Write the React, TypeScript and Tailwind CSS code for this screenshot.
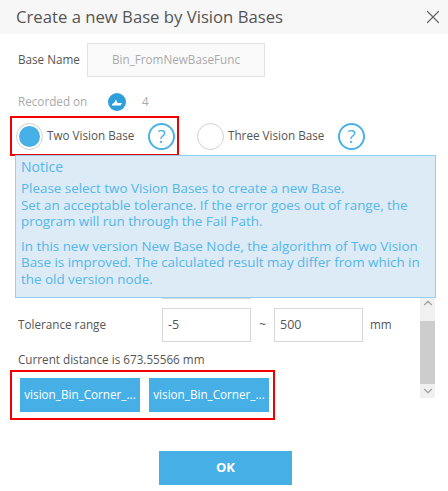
import { ChevronDown, ChevronUp, X } from "lucide-react";

function Help() {
  return (
    <span className="flex h-[27px] w-[27px] items-center justify-center rounded-full border-2 border-[#4ab2e6] text-[19px] leading-none text-[#4ab2e6]">
      ?
    </span>
  );
}

function Radio({ checked }: { checked?: boolean }) {
  return (
    <span className="flex h-[27px] w-[27px] items-center justify-center rounded-full border border-[#d0d0d0] bg-white">
      {checked && <span className="h-[21px] w-[21px] rounded-full bg-[#46afe6]" />}
    </span>
  );
}

function VisionButton() {
  return (
    <button className="h-[34px] w-[120px] whitespace-nowrap bg-[#46afe6] text-center text-[11.7px] text-white">
      vision_Bin_Corner_...
    </button>
  );
}

export default function App() {
  return (
    <div className="relative h-[491px] w-[448px] overflow-hidden bg-white font-['Open_Sans',sans-serif] text-[11.7px] text-[#555]">
      <header className="flex h-[34px] items-center justify-between bg-[#f7f7f7] pl-[16px] pr-[4px]">
        <h1 className="text-[16.7px] text-[#555]">Create a new Base by Vision Bases</h1>
        <X className="h-[22px] w-[22px] text-[#666]" strokeWidth={1.3} />
      </header>

      <div className="mt-[9px] flex h-[33px] items-center pl-[18px]">
        <span className="w-[69px]">Base Name</span>
        <div className="flex h-[34px] w-[178px] items-center justify-center border border-[#e2e2e2] bg-[#fafafa] text-[#aaa]">
          Bin_FromNewBaseFunc
        </div>
      </div>

      <div className="mt-[16px] flex h-[20px] items-center pl-[18px] text-[#aaa]">
        <span className="w-[90px]">Recorded on</span>
        <svg viewBox="0 0 18 18" className="h-[18px] w-[18px]">
          <circle cx="9" cy="9" r="9" fill="#2f9fdc" />
          <path d="M4 12.5h8.5l1.5-2.5H9.5L8 6.5 6 10l-2 1z" fill="#fff" />
        </svg>
        <span className="ml-[16px]">4</span>
      </div>

      <div className="mt-[4px] flex h-[40px] items-center pl-[10px]">
        <div className="flex h-[40px] w-[169px] items-center border-[2px] border-[#f00000] pl-[4px]">
          <Radio checked />
          <span className="ml-[4px] w-[101px]">Two Vision Base</span>
          <Help />
        </div>
        <div className="ml-[18px] flex items-center">
          <Radio />
          <span className="ml-[4px] w-[110px]">Three Vision Base</span>
          <Help />
        </div>
      </div>

      <div className="mt-[-1px] flex h-[259px] pl-[18px] pr-[13px]">
        <div className="flex-1">
          <div className="ml-[144px] mt-[110px] h-[34px] w-[89px] border border-[#d8d8d8]" />
          <div className="mt-[9px] flex h-[34px] items-center">
            <span className="w-[144px]">Tolerance range</span>
            <div className="flex h-[34px] w-[89px] items-center border border-[#d8d8d8] pl-[5px] text-[12.5px]">-5</div>
            <span className="w-[23px] text-center">~</span>
            <div className="flex h-[34px] w-[89px] items-center border border-[#d8d8d8] pl-[5px] text-[12.5px]">500</div>
            <span className="ml-[7px]">mm</span>
          </div>
          <p className="mt-[9px]">Current distance is 673.55566 mm</p>
          <div className="ml-[-8px] mt-[1px] flex h-[50px] w-[265px] items-center gap-[9px] border-[2px] border-[#f00000] pl-[8px]">
            <VisionButton />
            <VisionButton />
          </div>
        </div>
        <div className="mb-[16px] mt-[141px] flex w-[15px] flex-col items-center justify-between bg-[#f0f0f0] text-[#a0a0a0]">
          <ChevronUp className="h-[14px] w-[14px]" />
          <div className="mt-auto h-[63px] w-full bg-[#cdcdcd]" />
          <ChevronDown className="h-[14px] w-[14px]" />
        </div>
      </div>

      <div className="flex justify-center pl-[3px]">
        <button className="mt-[37px] h-[34px] w-[133px] bg-[#46afe6] text-[13px] font-bold text-white">OK</button>
      </div>

      <div className="absolute left-[15px] top-[155px] h-[143px] w-[421px] border border-[#8ed0f0] bg-[#dcebf5] px-[5px] text-[13.4px] leading-[16.6px] text-[#55b7ea]">
        <p className="text-[14px] leading-[22px]">Notice</p>
        <p className="mt-[2px]">Please select two Vision Bases to create a new Base.</p>
        <p>Set an acceptable tolerance. If the error goes out of range, the program will run through the Fail Path.</p>
        <p className="mt-[8px]">In this new version New Base Node, the algorithm of Two Vision Base is improved. The calculated result may differ from which in the old version node.</p>
      </div>
    </div>
  );
}
